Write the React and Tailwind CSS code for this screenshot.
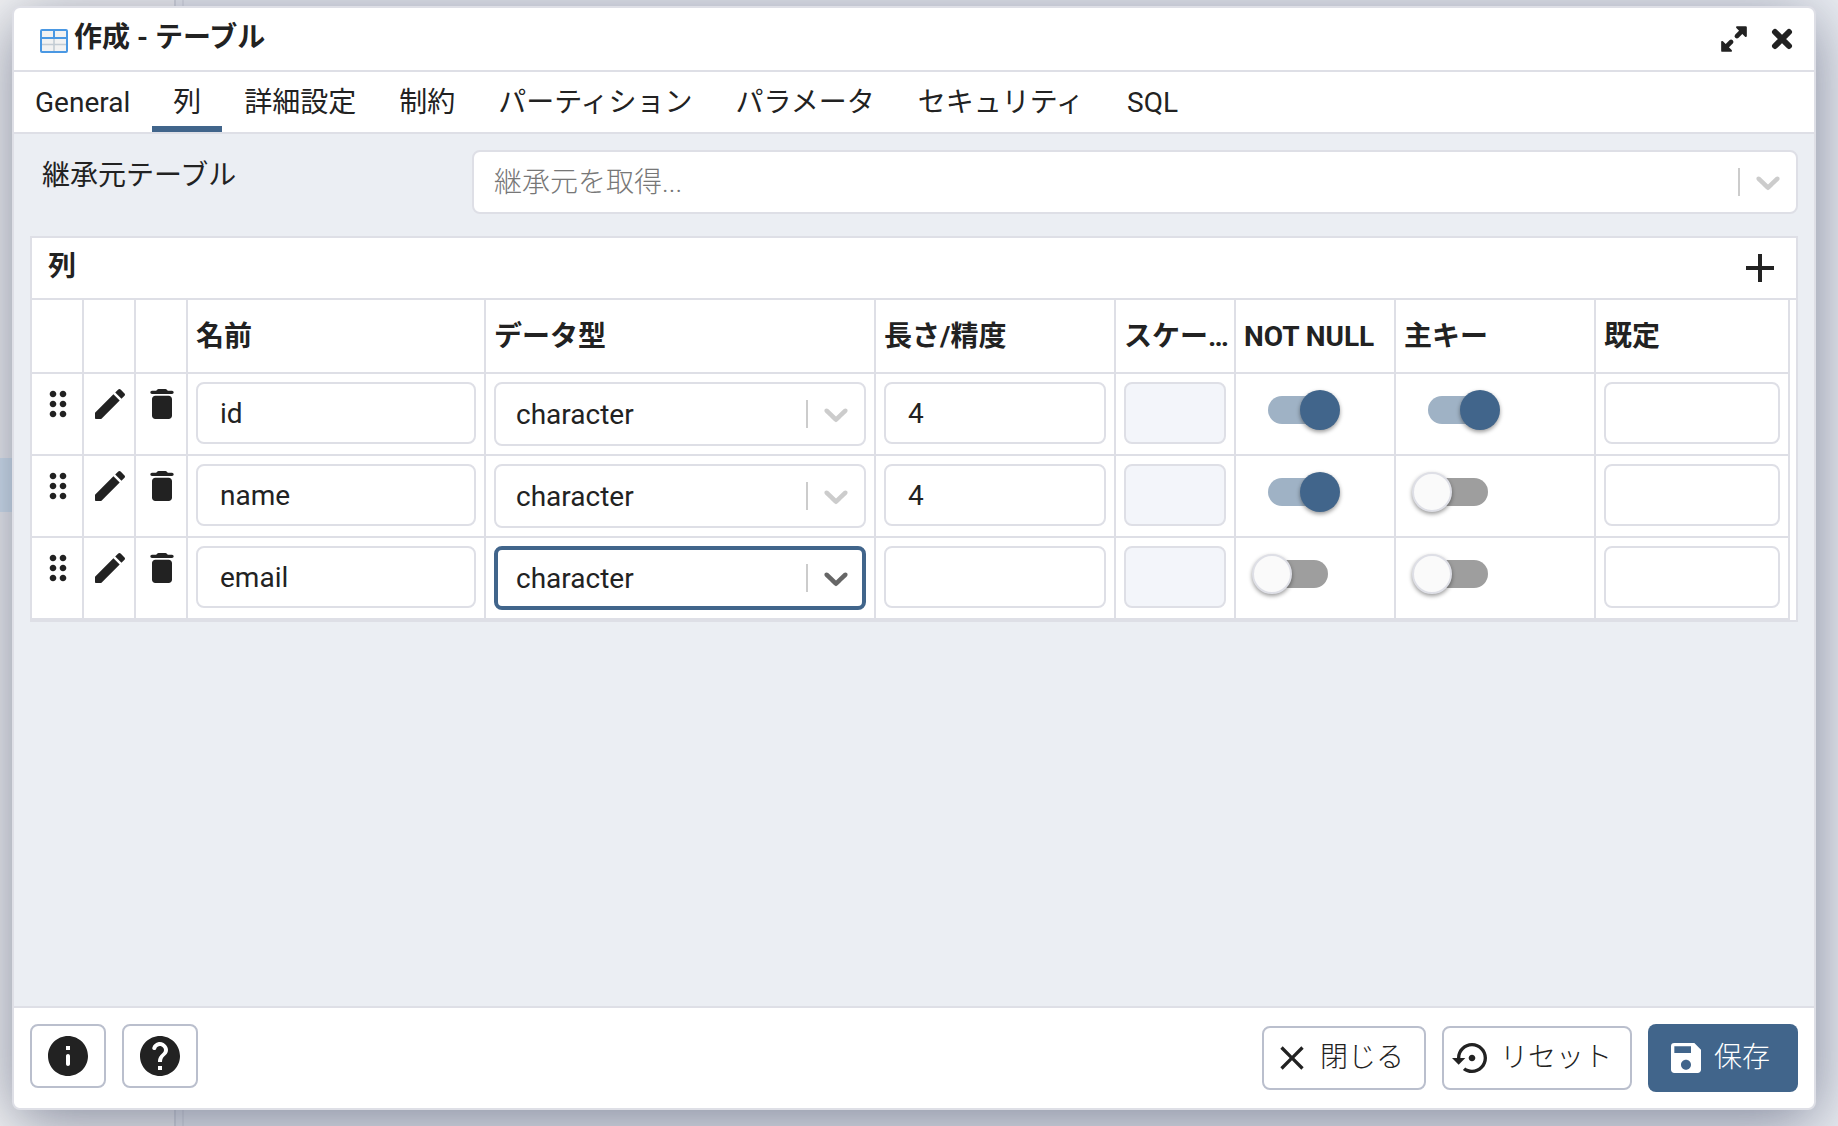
import { useState } from "react";
import { MdOutlineClose } from "react-icons/md";

function Icon({ children, size = "size-10", className = "" }) {
  return (
    <svg viewBox="0 0 24 24" fill="currentColor" aria-hidden="true" className={`${size} shrink-0 ${className}`}>
      {children}
    </svg>
  );
}

const DragIcon = () => (
  <Icon>
    <path d="M11 18c0 1.1-.9 2-2 2s-2-.9-2-2 .9-2 2-2 2 .9 2 2m-2-8c-1.1 0-2 .9-2 2s.9 2 2 2 2-.9 2-2-.9-2-2-2m0-6c-1.1 0-2 .9-2 2s.9 2 2 2 2-.9 2-2-.9-2-2-2m6 4c1.100 0 2-.9 2-2s-.9-2-2-2-2 .9-2 2 .9 2 2 2m0 2c-1.100 0-2 .9-2 2s.9 2 2 2 2-.9 2-2-.9-2-2-2m0 6c-1.100 0-2 .9-2 2s.9 2 2 2 2-.9 2-2-.9-2-2-2" />
  </Icon>
);
const EditIcon = () => (
  <Icon>
    <path d="M3 17.460v3.040c0 .280.220.500.500.500h3.040c.130 0 .260-.050.350-.150L17.810 9.940l-3.750-3.750L3.150 17.100q-.150.150-.150.360M20.710 7.040c.390-.390.390-1.020 0-1.410l-2.340-2.340a.9959.9959 0 0 0-1.410 0l-1.830 1.830 3.750 3.750z" />
  </Icon>
);
const DeleteIcon = () => (
  <Icon>
    <path d="M6 19c0 1.100.9 2 2 2h8c1.100 0 2-.9 2-2V9c0-1.100-.9-2-2-2H8c-1.100 0-2 .9-2 2zM18 4h-2.500l-.710-.710c-.180-.180-.440-.290-.700-.290H9.910c-.260 0-.520.110-.700.290L8.500 4H6c-.550 0-1 .450-1 1s.450 1 1 1h12c.550 0 1-.450 1-1s-.450-1-1-1" />
  </Icon>
);
const InfoIcon = () => (
  <Icon size="size-12">
    <path d="M12 2C6.480 2 2 6.480 2 12s4.480 10 10 10 10-4.480 10-10S17.520 2 12 2m0 15c-.550 0-1-.450-1-1v-4c0-.550.450-1 1-1s1 .450 1 1v4c0 .550-.450 1-1 1m1-8h-2V7h2z" />
  </Icon>
);
const HelpIcon = () => (
  <Icon size="size-12">
    <path d="M12 2C6.480 2 2 6.480 2 12s4.480 10 10 10 10-4.480 10-10S17.520 2 12 2m1 17h-2v-2h2zm2.070-7.750-.9.920c-.500.510-.860.970-1.040 1.690-.080.320-.130.680-.130 1.140h-2v-.500c0-.460.080-.9.220-1.310.200-.580.530-1.100.950-1.520l1.240-1.260c.460-.440.680-1.100.550-1.800-.130-.720-.690-1.330-1.390-1.530-1.110-.310-2.140.320-2.470 1.270-.120.370-.430.650-.820.650h-.300C8.400 9 8 8.440 8.160 7.880c.430-1.470 1.680-2.590 3.230-2.830 1.520-.240 2.970.550 3.870 1.800 1.180 1.630.830 3.380-.190 4.400" />
  </Icon>
);
const RestoreIcon = () => (
  <Icon>
    <path d="M14 12c0-1.100-.9-2-2-2s-2 .9-2 2 .9 2 2 2 2-.9 2-2m-2-9c-4.970 0-9 4.030-9 9H0l4 4 4-4H5c0-3.870 3.130-7 7-7s7 3.130 7 7-3.130 7-7 7c-1.510 0-2.910-.490-4.060-1.300l-1.420 1.440C8.040 20.300 9.940 21 12 21c4.970 0 9-4.030 9-9s-4.030-9-9-9" />
  </Icon>
);
const SaveIcon = () => (
  <Icon>
    <path
      fillRule="evenodd"
      d="M17 3H5a2 2 0 0 0-2 2v14c0 1.100.9 2 2 2h14c1.100 0 2-.9 2-2V7zM12 19c-1.660 0-3-1.340-3-3s1.340-3 3-3 3 1.340 3 3-1.340 3-3 3M15 9H5V5h10z"
    />
  </Icon>
);
const ExpandIcon = () => (
  <Icon size="size-7">
    <g stroke="currentColor" strokeWidth="4" strokeLinecap="round">
      <path d="M14.500 9.500 19 5" />
      <path d="M9.500 14.500 5 19" />
    </g>
    <path d="M14.500 1H22a1 1 0 0 1 1 1v7.500a.9.900 0 0 1-1.500.600L14 2.500A.9.900 0 0 1 14.500 1zM9.500 23H2a1 1 0 0 1-1-1v-7.500a.9.900 0 0 1 1.500-.600L10 21.500a.9.900 0 0 1-.500 1.500z" />
  </Icon>
);
const TimesIcon = () => (
  <svg viewBox="0 0 24 24" fill="none" stroke="currentColor" strokeWidth="6" strokeLinecap="round" aria-hidden="true" className="size-6">
    <path d="M5 5 19 19M19 5 5 19" />
  </svg>
);
const TableIcon = () => (
  <svg viewBox="0 0 28 24" aria-hidden="true" className="mt-1 h-6 w-7 shrink-0">
    <rect x="1" y="1" width="26" height="22" rx="1" fill="#f2f2f2" />
    <path d="M2 15.500H26M14 10V22" stroke="#c3ccd4" strokeWidth="1.600" fill="none" />
    <path d="M2 9H26M14 2V9" stroke="#4a98e3" strokeWidth="2" fill="none" />
    <rect x="1" y="1" width="26" height="22" rx="1" fill="none" stroke="#4a98e3" strokeWidth="2" />
  </svg>
);
const ChevronIcon = ({ className }) => (
  <svg viewBox="0 0 20 20" fill="currentColor" aria-hidden="true" className={`size-10 shrink-0 ${className}`}>
    <path d="M4.516 7.548c.436-.446 1.043-.481 1.576 0L10 11.295l3.908-3.747c.533-.481 1.141-.446 1.574 0 .436.445.408 1.197 0 1.615-.406.418-4.695 4.502-4.695 4.502a1.095 1.095 0 0 1-1.576 0S4.924 9.581 4.516 9.163s-.436-1.170 0-1.615" />
  </svg>
);

const TABS = ["General", "列", "詳細設定", "制約", "パーティション", "パラメータ", "セキュリティ", "SQL"];
const ROWS = [
  { name: "id", length: "4", notNull: true, primary: true },
  { name: "name", length: "4", notNull: true, primary: false },
  { name: "email", length: "", notNull: false, primary: false, focused: true },
];

function TextField({ label, value = "", disabled = false }) {
  return (
    <input
      aria-label={label}
      defaultValue={value}
      disabled={disabled}
      className="block h-[62px] w-full rounded-lg border-2 border-[#dedfe6] bg-white px-[22px] outline-none disabled:bg-[#f3f5fa]"
    />
  );
}

function Select({ label, id, options, placeholder = false, focused = false }) {
  return (
    <div className="relative">
      <select
        id={id}
        aria-label={label}
        className={`block h-16 w-full appearance-none rounded-lg bg-white pr-20 pt-0.5 outline-none ${
          focused ? "border-4 border-[#41658b] pl-[18px]" : "border-2 border-[#dedfe6] pl-5"
        } ${placeholder ? "font-light text-[#777777]" : ""}`}
      >
        {options.map((o) => (
          <option key={o}>{o}</option>
        ))}
      </select>
      <div className="pointer-events-none absolute inset-y-0 right-0 flex items-center gap-2 pr-[10px]">
        <span className="h-7 w-0.5 bg-[#cccccc]" />
        <ChevronIcon className={focused ? "text-[#666666]" : "text-[#cccccc]"} />
      </div>
    </div>
  );
}

function Toggle({ label, initial }) {
  const [on, setOn] = useState(initial);
  return (
    <label className="ml-2.5 mt-2 flex h-10 w-[88px] cursor-pointer items-center">
      <input type="checkbox" role="switch" aria-label={label} checked={on} onChange={() => setOn(!on)} className="peer sr-only" />
      <span className={`mx-auto flex h-7 w-[60px] items-center rounded-full ${on ? "justify-end bg-[#9fb2c5]" : "justify-start bg-[#9e9e9e]"}`}>
        <span
          className={`size-10 shrink-0 rounded-full shadow-[0_2px_4px_rgba(0,0,0,0.4)] ${
            on ? "-mr-3 bg-[#41658b]" : "-ml-4 border-2 border-[#dedfe6] bg-[#fafafa]"
          }`}
        />
      </span>
    </label>
  );
}

const head = "truncate border-b-2 border-r-2 border-[#dedfe6] pl-2 pr-1 pt-0.5 text-left font-bold";
const cell = "border-b-2 border-r-2 border-[#dedfe6] px-2 pt-2 align-top";
const iconCell = "border-b-2 border-r-2 border-[#dedfe6] pl-0.5 pt-2.5 align-top";

export default function App() {
  const [tab, setTab] = useState("列");
  return (
    <div className="relative isolate flex min-h-screen flex-col overflow-hidden px-3 pb-4 pt-1.5 font-[Roboto,'Noto_Sans_CJK_JP',sans-serif] text-[28px] leading-9 text-[#222222]">
      <div className="absolute inset-0 -z-10 flex bg-[#ebeef3]">
        <div className="flex w-44 flex-col border-r-2 border-[#d5d8df] bg-[#f4f5f6]">
          <div className="mt-[458px] h-[54px] bg-[#d6e8f5]" />
        </div>
        <div className="w-2 border-r-2 border-[#dcdfe6]" />
      </div>

      <section
        role="dialog"
        aria-labelledby="dialog-title"
        className="mr-2.5 flex flex-1 flex-col rounded-lg border-2 border-[#dedfe6] bg-white shadow-[0_12px_64px_rgba(100,106,130,0.8)]"
      >
        <header className="flex h-16 items-center border-b-2 border-[#dedfe6] pl-[26px] pr-5">
          <TableIcon />
          <h1 id="dialog-title" className="ml-1.5 flex-1 pb-0.5 font-bold">作成 - テーブル</h1>
          <button type="button" aria-label="最大化" className="mr-[22px]"><ExpandIcon /></button>
          <button type="button" aria-label="閉じる"><TimesIcon /></button>
        </header>

        <nav role="tablist" className="flex h-[62px] gap-px border-b-2 border-[#dedfe6]">
          {TABS.map((t) => (
            <button
              key={t}
              type="button"
              role="tab"
              aria-selected={tab === t}
              onClick={() => setTab(t)}
              className={`border-b-[6px] px-[21px] pt-2 ${tab === t ? "border-[#41658b]" : "border-transparent"}`}
            >
              {t}
            </button>
          ))}
        </nav>

        <main className="flex-1 bg-[#ebeef3] px-4 pt-4">
          <div className="flex">
            <label htmlFor="inherits" className="w-1/4 pl-3 pt-2">継承元テーブル</label>
            <div className="flex-1">
              <Select id="inherits" placeholder options={["継承元を取得..."]} />
            </div>
          </div>

          <div className="mt-[22px] border-2 border-[#dedfe6] bg-white">
            <div className="flex h-[62px] items-center border-b-2 border-[#dedfe6] pl-4 pr-4">
              <h2 className="flex-1 pb-0.5 font-bold">列</h2>
              <button type="button" aria-label="追加">
                <svg viewBox="0 0 40 40" stroke="currentColor" strokeWidth="4" aria-hidden="true" className="size-10">
                  <path d="M20 6V34M6 20H34" />
                </svg>
              </button>
            </div>
            <div className="pr-1.5">
              <table className="w-full table-fixed border-separate border-spacing-0">
                <colgroup>
                  <col className="w-[52px]" />
                  <col className="w-[52px]" />
                  <col className="w-[52px]" />
                  <col className="w-[298px]" />
                  <col className="w-[390px]" />
                  <col className="w-60" />
                  <col className="w-[120px]" />
                  <col className="w-40" />
                  <col className="w-[200px]" />
                  <col />
                </colgroup>
                <thead>
                  <tr className="h-[74px]">
                    <th className={head} />
                    <th className={head} />
                    <th className={head} />
                    {["名前", "データ型", "長さ/精度", "スケール", "NOT NULL", "主キー", "既定"].map((h) => (
                      <th key={h} scope="col" className={head}>{h}</th>
                    ))}
                  </tr>
                </thead>
                <tbody>
                  {ROWS.map((r) => (
                    <tr key={r.name} className="h-[82px]">
                      <td className={iconCell}><button type="button" aria-label={`${r.name} を移動`} className="mx-auto block"><DragIcon /></button></td>
                      <td className={iconCell}><button type="button" aria-label={`${r.name} を編集`} className="mx-auto block"><EditIcon /></button></td>
                      <td className={iconCell}><button type="button" aria-label={`${r.name} を削除`} className="mx-auto block"><DeleteIcon /></button></td>
                      <td className={cell}><TextField label="名前" value={r.name} /></td>
                      <td className={cell}><Select label="データ型" options={["character"]} focused={r.focused} /></td>
                      <td className={cell}><TextField label="長さ/精度" value={r.length} /></td>
                      <td className={cell}><TextField label="スケール" disabled /></td>
                      <td className={cell}><Toggle label="NOT NULL" initial={r.notNull} /></td>
                      <td className={cell}><Toggle label="主キー" initial={r.primary} /></td>
                      <td className={cell}><TextField label="既定" /></td>
                    </tr>
                  ))}
                </tbody>
              </table>
            </div>
          </div>
        </main>

        <footer className="flex items-center gap-4 rounded-b-lg border-t-2 border-[#dedfe6] bg-white px-4 pb-4 pt-4">
          <button type="button" aria-label="情報" className="-mt-1 flex h-16 w-[76px] items-center justify-center rounded-lg border-2 border-[#babfcd]"><InfoIcon /></button>
          <button type="button" aria-label="ヘルプ" className="-mt-1 mr-auto flex h-16 w-[76px] items-center justify-center rounded-lg border-2 border-[#babfcd]"><HelpIcon /></button>
          <button type="button" className="flex h-16 items-center gap-2 rounded-lg border-2 border-[#babfcd] pl-2 pr-5 font-light">
            <MdOutlineClose aria-hidden="true" className="size-10" />閉じる
          </button>
          <button type="button" className="flex h-16 items-center gap-2 rounded-lg border-2 border-[#babfcd] pl-2 pr-[18px] font-light">
            <RestoreIcon />リセット
          </button>
          <button type="button" className="flex h-[68px] items-center gap-2 rounded-lg bg-[#41658b] pl-[18px] pr-7 font-light text-white">
            <SaveIcon />保存
          </button>
        </footer>
      </section>
    </div>
  );
}
